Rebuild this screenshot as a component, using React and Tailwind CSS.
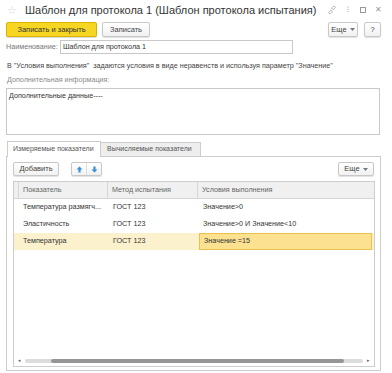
import React from 'react';

const font = { fontFamily: '"Liberation Sans", Arial, sans-serif' };

const Btn = ({ children, className = '' }) => (
  <div className={`flex items-center justify-center border border-[#c8c8c8] rounded-[2px] bg-gradient-to-b from-white to-[#f1f1f1] text-[#444] text-[7.5px] shadow-[0_1px_1px_rgba(0,0,0,0.12)] ${className}`}>
    {children}
  </div>
);

const Caret = () => (
  <svg width="5" height="3" viewBox="0 0 5 3" className="ml-[3px]"><path d="M0 0 H5 L2.5 3 Z" fill="#777" /></svg>
);

const rows = [
  { name: 'Температура размягч...', method: 'ГОСТ 123', cond: 'Значение>0' },
  { name: 'Эластичность', method: 'ГОСТ 123', cond: 'Значение>0 И Значение<10' },
  { name: 'Температура', method: 'ГОСТ 123', cond: 'Значение =15', selected: true },
];

const App = () => {
  return (
    <div style={font} className="w-[392px] h-[373px] bg-white overflow-hidden flex flex-col px-[6px] text-[#333]">
      {/* заголовок */}
      <div className="h-[20px] flex items-center shrink-0">
        <span className="text-[#d6d6d6] text-[11px] ml-[1px] w-[18px]">☆</span>
        <span className="text-[11px] text-[#333]">Шаблон для протокола 1 (Шаблон протокола испытания)</span>
        <div className="ml-auto flex items-center gap-[9px] mr-[4px]">
          <svg width="8" height="8" viewBox="0 0 8 8" fill="none" stroke="#a8a8a8" strokeWidth="0.8">
            <rect x="3.6" y="0.6" width="3.8" height="2.4" rx="1.2" transform="rotate(-45 5.5 1.8)" />
            <rect x="0.6" y="5" width="3.8" height="2.4" rx="1.2" transform="rotate(-45 2.5 6.2)" />
          </svg>
          <span className="text-[8px] w-[6px] text-center text-[#999]">⁝</span>
          <div className="w-[6px] h-[6px] border border-[#999]" />
          <span className="text-[8px] leading-none text-[#999]">✕</span>
        </div>
      </div>

      {/* кнопки */}
      <div className="h-[15px] mt-[2px] flex items-center shrink-0">
        <div className="h-[15px] w-[91px] flex items-center justify-center rounded-[2px] border border-[#d8b400] bg-[#f6d622] text-[7.5px] text-[#333] shadow-[0_1px_1px_rgba(0,0,0,0.15)]">
          Записать и закрыть
        </div>
        <Btn className="h-[15px] w-[48px] ml-[5px]">Записать</Btn>
        <Btn className="h-[15px] w-[30px] ml-auto">Еще<Caret /></Btn>
        <Btn className="h-[15px] w-[17px] ml-[6px] mr-[5px]">?</Btn>
      </div>

      {/* наименование */}
      <div className="h-[14px] mt-[3px] flex items-center shrink-0">
        <span className="text-[7.2px] text-[#777] w-[54px]">Наименование:</span>
        <div className="h-[14px] w-[233px] border border-[#c8c8c8] flex items-center px-[2px] text-[7.2px] text-[#333]">
          Шаблон для протокола 1
        </div>
      </div>

      <div className="mt-[7px] h-[10px] flex items-center text-[7.2px] text-[#444] shrink-0 whitespace-pre ml-[1px]">
        {'В "Условия выполнения"  задаются условия в виде неравенств и используя параметр "Значение"'}
      </div>
      <div className="mt-[4px] h-[10px] flex items-center text-[7.2px] text-[#8a8a8a] shrink-0 ml-[1px]">
        Дополнительная информация:
      </div>
      <div className="mt-[3px] h-[47px] w-[374px] border border-[#c8c8c8] px-[2px] pt-[2px] text-[7.2px] text-[#333] shrink-0">
        Дополнительные данные----
      </div>

      {/* вкладки */}
      <div className="mt-[5px] h-[16px] flex items-end shrink-0 pl-[1px]">
        <div className="h-[16px] w-[94px] border border-[#cdcdcd] border-b-0 bg-white flex items-center pl-[5px] text-[7px] text-[#555] relative z-10 -mb-px">
          Измеряемые показатели
        </div>
        <div className="h-[14px] w-[100px] border border-[#cdcdcd] border-l-0 border-b-0 bg-[#eeeeee] flex items-center pl-[6px] text-[7px] text-[#555]">
          Вычисляемые показатели
        </div>
      </div>
      <div className="h-[215px] w-[375px] border border-[#cdcdcd] shrink-0 flex flex-col px-[6px]">
        <div className="h-[14px] mt-[5px] flex items-center">
          <Btn className="h-[14px] w-[46px]">Добавить</Btn>
          <div className="ml-[12px] h-[14px] w-[31px] flex border border-[#c8c8c8] rounded-[2px] bg-gradient-to-b from-white to-[#f1f1f1] shadow-[0_1px_1px_rgba(0,0,0,0.12)]">
            <div className="flex-1 flex items-center justify-center border-r border-[#ddd]">
              <svg width="7" height="7" viewBox="0 0 7 7"><path d="M3.5 0.5 L6.5 3.5 H4.6 V6.5 H2.4 V3.5 H0.5 Z" fill="#3d8fd6" /></svg>
            </div>
            <div className="flex-1 flex items-center justify-center">
              <svg width="7" height="7" viewBox="0 0 7 7"><path d="M3.5 6.5 L6.5 3.5 H4.6 V0.5 H2.4 V3.5 H0.5 Z" fill="#3d8fd6" /></svg>
            </div>
          </div>
          <Btn className="h-[14px] w-[36px] ml-auto">Еще<Caret /></Btn>
        </div>

        {/* таблица */}
        <div className="mt-[5px] h-[186px] w-[362px] border border-[#cdcdcd] flex flex-col">
          <div className="h-[17px] bg-[#f0f0f0] border-b border-[#d6d6d6] flex text-[7.2px] text-[#666]">
            <div className="w-[5px] border-r border-[#d6d6d6]" />
            <div className="w-[89px] flex items-center pl-[4px] border-r border-[#d6d6d6]">Показатель</div>
            <div className="w-[90px] flex items-center pl-[4px] border-r border-[#d6d6d6]">Метод испытания</div>
            <div className="flex-1 flex items-center pl-[4px]">Условия выполнения</div>
          </div>
          {rows.map((r, i) => (
            <div key={i} className={`h-[17px] flex text-[7.2px] text-[#333] ${r.selected ? 'bg-[#fbf1cc]' : ''}`}>
              <div className="w-[5px]" />
              <div className="w-[90px] flex items-center pl-[4px]">{r.name}</div>
              <div className="w-[90px] flex items-center pl-[4px]">{r.method}</div>
              <div className={`flex-1 flex items-center pl-[4px] mr-[2px] ${r.selected ? 'bg-[#fbe190] border border-[#e8c24c]' : ''}`}>{r.cond}</div>
            </div>
          ))}
          <div className="flex-1" />
          <div className="h-[8px] flex items-center px-[4px] mb-[1px]">
            <span className="text-[5px] text-[#666]">◂</span>
            <div className="flex-1 h-[4px] mx-[4px] bg-[#dcdcdc] rounded-full flex">
              <div className="ml-[26px] w-[293px] h-[4px] bg-[#969696] rounded-full" />
            </div>
            <span className="text-[5px] text-[#666]">▸</span>
          </div>
        </div>
      </div>
    </div>
  );
};

export default App;
